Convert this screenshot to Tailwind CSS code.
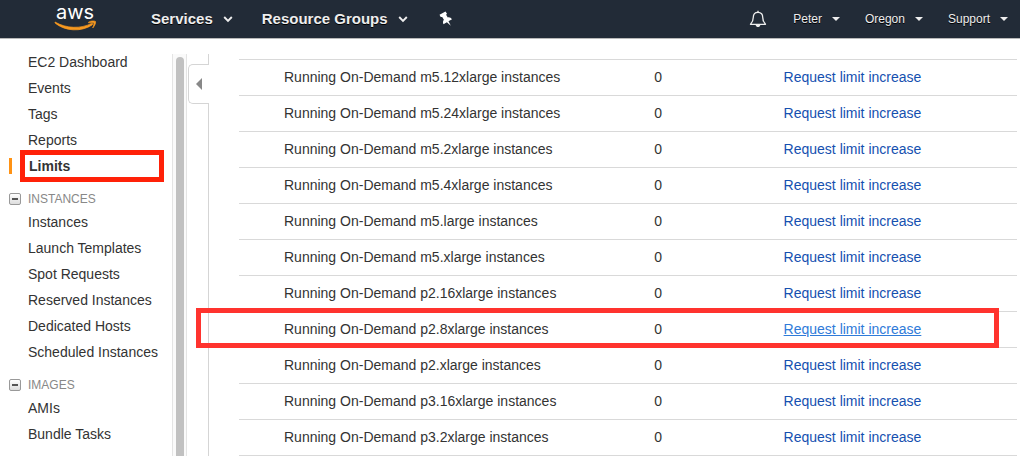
<!DOCTYPE html>
<html lang="en">
<head>
<meta charset="utf-8">
<title>EC2 Limits</title>
<script src="https://cdn.jsdelivr.net/npm/@tailwindcss/browser@4"></script>
</head>
<body class="flex h-screen flex-col overflow-hidden bg-white font-['Liberation_Sans',Arial,sans-serif] text-sm text-[#333]">
<header class="flex h-[39px] shrink-0 items-center border-b border-[#b9b9b9] bg-[#222b37] pr-3 text-[#eee]">
  <a href="#" aria-label="AWS home" class="ml-[54px] block">
    <svg class="block h-[38px] w-11" viewBox="0 0 44 38" fill="none">
      <text x="21" y="19" text-anchor="middle" font-family="Inter, sans-serif" font-size="20" fill="#fff">aws</text>
      <path d="M1 22C12 28.600 27 29 37.500 23.400C38.500 22.900 39.200 24 38.200 24.900C27 32.200 11 31.400 1 22.900Z" fill="#f7981f" stroke="#f7981f" stroke-width=".7"/>
      <path d="M34.500 22.200C37 20.600 40.500 20.800 41.500 21.500C42 23 40.500 26.200 38.700 28C39.500 26 40.300 23.700 39.900 23C39.200 22.400 36.500 22.500 34.500 22.800Z" fill="#f7981f" stroke="#f7981f" stroke-width=".7"/>
    </svg>
  </a>
  <nav class="flex flex-1 items-center">
    <button class="ml-[53px] flex items-center gap-2.5 text-[15px] font-bold text-shadow-[0_1px_0_#000]">Services
      <svg class="h-2 w-2.5" viewBox="0 0 10 8" fill="none" stroke="#eee" stroke-width="1.900"><path d="M1.200 2L5 5.800L8.800 2"/></svg></button>
    <button class="ml-[29px] flex items-center gap-2.5 text-[15px] font-bold text-shadow-[0_1px_0_#000]">Resource Groups
      <svg class="h-2 w-2.5" viewBox="0 0 10 8" fill="none" stroke="#eee" stroke-width="1.900"><path d="M1.200 2L5 5.800L8.800 2"/></svg></button>
    <button aria-label="Edit shortcuts" class="ml-[30px]">
      <svg class="block h-4 w-4" viewBox="0 0 16 16" fill="#fff"><path d="M1.500 3.700L7.500 .5L9 2.700L8.100 3.800L9.800 6.400C11.500 6 13 6.700 14 8.300L10.500 10.300L12.800 14.800L8.900 11.200L5.500 13.200C4.700 11.600 4.800 10 5.900 8.700L4.200 6L2.700 6.100Z"/></svg></button>
    <button aria-label="Notifications" class="ml-auto">
      <svg class="block h-[18px] w-[18px]" viewBox="0 0 18 18" fill="none" stroke="#eee" stroke-width="1.300" stroke-linejoin="round"><path d="M9 2.300C5.700 2.300 4.300 4.600 4.300 7.300C4.300 10.500 3.500 12.300 1.500 14.300H16.500C14.500 12.300 13.700 10.500 13.700 7.300C13.700 4.600 12.300 2.300 9 2.300Z"/><path d="M9 .8V2.300"/><path d="M6.700 15H11.300C11 17.700 7 17.700 6.700 15Z" fill="#eee" stroke="none"/></svg></button>
    <button class="ml-[26px] flex items-center gap-2.5 text-xs text-shadow-[0_1px_0_#000]">Peter
      <svg class="h-1 w-2" viewBox="0 0 8 4" fill="#eee"><path d="M0 0H8L4 4Z"/></svg></button>
    <button class="ml-[25px] flex items-center gap-2.5 text-xs text-shadow-[0_1px_0_#000]">Oregon
      <svg class="h-1 w-2" viewBox="0 0 8 4" fill="#eee"><path d="M0 0H8L4 4Z"/></svg></button>
    <button class="ml-[25px] flex items-center gap-2.5 text-xs text-shadow-[0_1px_0_#000]">Support
      <svg class="h-1 w-2" viewBox="0 0 8 4" fill="#eee"><path d="M0 0H8L4 4Z"/></svg></button>
  </nav>
</header>
<div class="flex min-h-0 flex-1">
  <nav aria-label="EC2" class="w-[172px] shrink-0 pt-2.5 leading-[26px] whitespace-nowrap">
    <ul class="pl-7">
      <li><a href="#">EC2 Dashboard</a></li>
      <li><a href="#">Events</a></li>
      <li><a href="#">Tags</a></li>
      <li><a href="#">Reports</a></li>
      <li class="relative font-bold">
        <span class="absolute top-[5px] -left-[19px] h-4 w-[3px] bg-[#ff9214]"></span>
        <a href="#" class="ml-px">Limits</a>
        <span class="pointer-events-none absolute -top-[3px] right-2 -bottom-[3px] -left-2 border-5 border-[#ff2108]"></span>
      </li>
    </ul>
    <button class="flex h-[30px] w-full items-center gap-[7px] pt-2.5 pl-[9px] text-xs text-[#888]">
      <span class="flex h-3 w-3 items-center justify-center rounded-xs border border-[#999] bg-linear-to-b from-white to-[#ddd]"><span class="h-0.5 w-1.5 bg-[#555]"></span></span>INSTANCES</button>
    <ul class="pl-7">
      <li><a href="#">Instances</a></li>
      <li><a href="#">Launch Templates</a></li>
      <li><a href="#">Spot Requests</a></li>
      <li><a href="#">Reserved Instances</a></li>
      <li><a href="#">Dedicated Hosts</a></li>
      <li><a href="#">Scheduled Instances</a></li>
    </ul>
    <button class="flex h-[30px] w-full items-center gap-[7px] pt-2.5 pl-[9px] text-xs text-[#888]">
      <span class="flex h-3 w-3 items-center justify-center rounded-xs border border-[#999] bg-linear-to-b from-white to-[#ddd]"><span class="h-0.5 w-1.5 bg-[#555]"></span></span>IMAGES</button>
    <ul class="pl-7">
      <li><a href="#">AMIs</a></li>
      <li><a href="#">Bundle Tasks</a></li>
    </ul>
  </nav>
  <div class="mt-[15px] flex w-[15px] shrink-0 justify-center border-x border-[#e4e4e4] bg-[#fafafa] pt-[3px]">
    <div class="w-2 rounded-t-full bg-[#c1c1c1]"></div>
  </div>
  <div class="mt-[15px] flex w-[22px] shrink-0 flex-col pl-px">
    <div class="h-2.5 border-r border-[#d5d5d5]"></div>
    <button aria-label="Collapse navigation" class="flex h-10 items-center justify-center rounded-l-[5px] border-y border-l border-[#d5d5d5]">
      <svg class="h-3 w-1.5" viewBox="0 0 6 12" fill="#888"><path d="M6 0V12L0 6Z"/></svg></button>
    <div class="flex-1 border-r border-[#d5d5d5]"></div>
  </div>
  <main class="min-w-0 flex-1 pt-5 pr-[3px] pl-[30px]">
    <table class="w-full table-fixed border-collapse border-t border-[#d9d9d9]">
      <colgroup><col class="w-[53%]"><col class="w-[17%]"><col class="w-[30%]"></colgroup>
      <tbody id="limits"></tbody>
    </table>
  </main>
</div>
<script>
  const types = ['m5.12xlarge', 'm5.24xlarge', 'm5.2xlarge', 'm5.4xlarge', 'm5.large', 'm5.xlarge', 'p2.16xlarge', 'p2.8xlarge', 'p2.xlarge', 'p3.16xlarge', 'p3.2xlarge'];
  const marked = 'p2.8xlarge';
  document.getElementById('limits').innerHTML = types.map(type => `
    <tr class="relative h-9 border-b border-[#d9d9d9]">
      <td class="pb-0.5 pl-[45px]">Running On-Demand ${type} instances</td>
      <td class="pb-0.5 pl-[3px]">0</td>
      <td class="pb-0.5"><a href="#" class="${type === marked ? 'text-[#2f7bd9] underline' : 'text-[#1550b0]'}">Request limit increase</a>${type === marked ? '<span class="pointer-events-none absolute -top-1 right-[18px] -bottom-px -left-[43px] border-5 border-[#ff332e]"></span>' : ''}</td>
    </tr>`).join('');
</script>
</body>
</html>
